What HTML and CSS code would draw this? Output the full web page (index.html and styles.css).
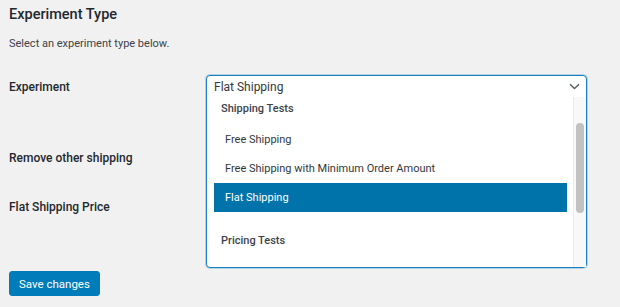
FILE: index.html
```html
<!DOCTYPE html>
<html lang="en">
<head>
    <meta charset="UTF-8">
    <title>Experiment Type</title>
    <link rel="stylesheet" href="styles.css">
</head>
<body>
    <div class="wrap">
        <h2 class="title">Experiment Type</h2>
        <p class="desc">Select an experiment type below.</p>

        <div class="form">
            <div class="row row-experiment">
                <div class="label">Experiment</div>
                <div class="field">
                    <div class="select">
                        <div class="select-value">
                            <span>Flat Shipping</span>
                            <svg class="chevron" width="11" height="7" viewBox="0 0 11 7">
                                <path d="M1 1.2 L5.5 5.5 L10 1.2" fill="none" stroke="#555d66" stroke-width="1.4"/>
                            </svg>
                        </div>
                        <div class="dropdown">
                            <div class="list">
                                <div class="group">Shipping Tests</div>
                                <div class="option">Free Shipping</div>
                                <div class="option">Free Shipping with Minimum Order Amount</div>
                                <div class="option selected">Flat Shipping</div>
                                <div class="group group-gap">Pricing Tests</div>
                                <div class="option">Bulk Discount</div>
                            </div>
                            <div class="scrollbar"><div class="thumb"></div></div>
                        </div>
                    </div>
                </div>
            </div>
            <div class="row row-remove">
                <div class="label">Remove other shipping</div>
            </div>
            <div class="row row-price">
                <div class="label">Flat Shipping Price</div>
            </div>
        </div>

        <button class="button">Save changes</button>
    </div>
</body>
</html>
```

FILE: styles.css
```css
body {
    margin: 0;
    background-color: #f1f1f1;
    color: #23282d;
    font-family: Roboto, "Liberation Sans", sans-serif;
    font-size: 12px;
}
.wrap {
    padding: 0 9px;
}
.title {
    margin: 5px 0 0;
    font-size: 14.5px;
    line-height: 20px;
    font-weight: 500;
    color: #23282d;
}
.desc {
    margin: 11px 0 0;
    font-size: 11px;
    line-height: 16px;
    color: #3c434a;
}
.row {
    display: flex;
}
.row-experiment {
    margin-top: 23px;
}
.row-remove {
    margin-top: 47px;
}
.row-price {
    margin-top: 25px;
}
.label {
    width: 197px;
    line-height: 24px;
    font-weight: 500;
    font-size: 12px;
    color: #23282d;
}
.field {
    position: relative;
    width: 381px;
    height: 24px;
}
.select {
    position: absolute;
    top: 0;
    left: 0;
    width: 381px;
    box-sizing: border-box;
    background: #fff;
    border: 1px solid #1a7fc0;
    border-radius: 4px;
    box-shadow: 0 0 0 1px rgba(0, 124, 186, 0.25);
    z-index: 2;
}
.select-value {
    display: flex;
    align-items: center;
    justify-content: space-between;
    height: 21px;
    padding: 0 6px 0 7px;
    font-size: 12px;
    color: #32373c;
}
.chevron {
    display: block;
}
.dropdown {
    display: flex;
    height: 170px;
    overflow: hidden;
}
.list {
    flex: 1;
    padding: 0 6px 0 7px;
    font-size: 11px;
    color: #32373c;
}
.group {
    line-height: 24px;
    padding-left: 7px;
    margin-bottom: 4px;
    font-weight: 500;
    color: #3c434a;
}
.group-gap {
    margin-top: 17px;
}
.option {
    height: 29px;
    line-height: 29px;
    padding-left: 11px;
}
.option.selected {
    background-color: #0073aa;
    color: #fff;
}
.scrollbar {
    width: 12px;
    background: #f8f8f8;
    border-left: 1px solid #ececec;
    position: relative;
}
.thumb {
    position: absolute;
    top: 26px;
    left: 2px;
    width: 8px;
    height: 90px;
    border-radius: 4px;
    background: #c2c2c2;
}
.button {
    margin-top: 52px;
    height: 25px;
    padding: 0 9px;
    font-family: inherit;
    font-size: 11.5px;
    color: #fff;
    background-color: #007cba;
    border: 1px solid #007cba;
    border-radius: 3px;
}
```
